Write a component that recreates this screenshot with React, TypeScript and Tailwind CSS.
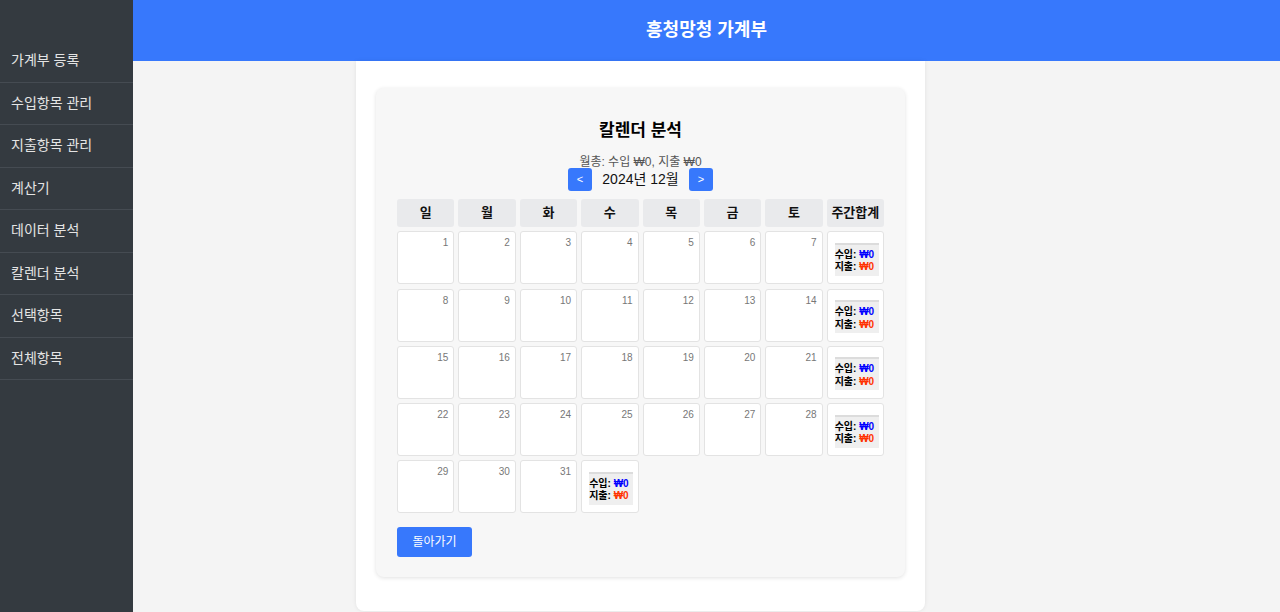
import React from 'react';

const menu = [
  '가계부 등록',
  '수입항목 관리',
  '지출항목 관리',
  '계산기',
  '데이터 분석',
  '칼렌더 분석',
  '선택항목',
  '전체항목',
];

const days = ['일', '월', '화', '수', '목', '금', '토', '주간합계'];

// null = empty slot, 'sum' = weekly total
const weeks: (number | 'sum' | null)[][] = [
  [1, 2, 3, 4, 5, 6, 7, 'sum'],
  [8, 9, 10, 11, 12, 13, 14, 'sum'],
  [15, 16, 17, 18, 19, 20, 21, 'sum'],
  [22, 23, 24, 25, 26, 27, 28, 'sum'],
  [29, 30, 31, 'sum', null, null, null, null],
];

function WeekSum() {
  return (
    <div className="flex h-[53px] items-center rounded-[3px] border border-[#e3e3e3] bg-white pl-[7px]">
      <div className="mt-[3px] w-[44px] border-t-2 border-[#dcdcdc] bg-[#efefef] pt-[4px] pb-[2px] text-[10px] font-bold leading-[12.5px] text-black">
        <div>
          수입: <span className="text-[#0000ff]">₩0</span>
        </div>
        <div>
          지출: <span className="text-[#ff3300]">₩0</span>
        </div>
      </div>
    </div>
  );
}

export default function App() {
  return (
    <div
      className="flex h-[612px] w-[1280px] overflow-hidden bg-[#f4f4f4]"
      style={{ fontFamily: '"Liberation Sans", "Noto Sans CJK KR", sans-serif' }}
    >
      <aside className="w-[133px] shrink-0 bg-[#343a40] pt-[40px]">
        {menu.map((m) => (
          <div
            key={m}
            className="flex h-[42.5px] items-center border-b border-[#454b52] pl-[11px] text-[14px] text-[#e4e4e4]"
          >
            {m}
          </div>
        ))}
      </aside>

      <div className="flex flex-1 flex-col">
        <header className="flex h-[61px] shrink-0 items-center justify-center bg-[#3778fc] text-[18px] font-bold text-white">
          흥청망청 가계부
        </header>

        <main className="flex-1">
          <div className="ml-[223px] h-[550px] w-[569px] rounded-b-[8px] bg-white px-[20px] pt-[27px] shadow-[0_0_4px_rgba(0,0,0,0.08)]">
            <div className="rounded-[8px] bg-[#f7f7f7] px-[21px] pt-[28px] pb-[20px] shadow-[0_1px_4px_rgba(0,0,0,0.12)]">
              <h2 className="text-center text-[17px] font-bold leading-[30px] text-black">칼렌더 분석</h2>
              <p className="mt-[10px] text-center text-[12px] leading-[12px] text-[#555]">
                월총: 수입 ₩0, 지출 ₩0
              </p>
              <div className="flex items-center justify-center">
                <button className="h-[23px] w-[24px] rounded-[3px] bg-[#3778fc] text-[11px] text-white">&lt;</button>
                <span className="w-[97px] text-center text-[14px] text-[#111]">2024년 12월</span>
                <button className="h-[23px] w-[24px] rounded-[3px] bg-[#3778fc] text-[11px] text-white">&gt;</button>
              </div>

              <div className="mt-[8px] grid grid-cols-8 gap-x-[4px] gap-y-[4.25px]">
                {days.map((d) => (
                  <div
                    key={d}
                    className="flex h-[28px] items-center justify-center rounded-[3px] bg-[#e9eaec] text-[13px] font-bold text-[#111]"
                  >
                    {d}
                  </div>
                ))}
                {weeks.flat().map((c, i) =>
                  c === 'sum' ? (
                    <WeekSum key={i} />
                  ) : c === null ? (
                    <div key={i} />
                  ) : (
                    <div
                      key={i}
                      className="h-[53px] rounded-[3px] border border-[#e3e3e3] bg-white pt-[3px] pr-[5px] text-right text-[10px] text-[#777]"
                    >
                      {c}
                    </div>
                  )
                )}
              </div>

              <button className="mt-[14px] h-[30px] w-[75px] rounded-[3px] bg-[#3778fc] text-[12px] text-white">
                돌아가기
              </button>
            </div>
          </div>
        </main>
      </div>
    </div>
  );
}
